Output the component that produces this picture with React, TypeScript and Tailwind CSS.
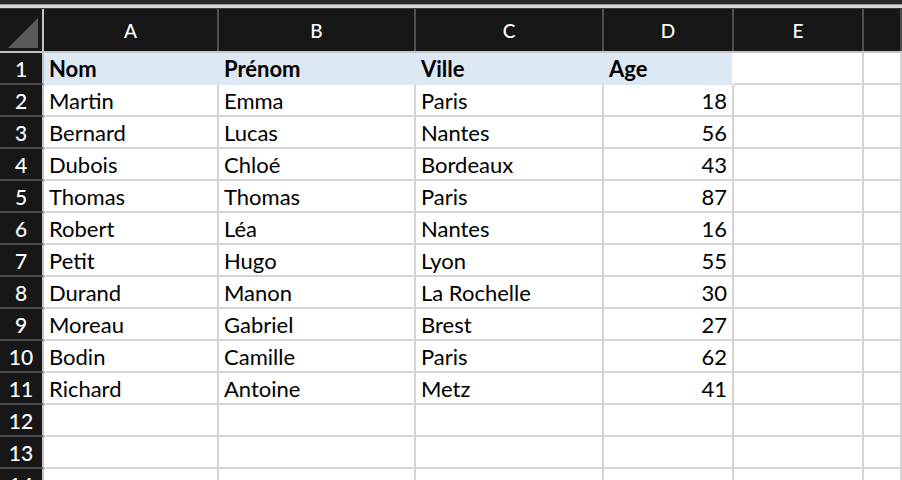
import React from "react";

const cols = [
  { key: "A", w: "w-[175px]" },
  { key: "B", w: "w-[197px]" },
  { key: "C", w: "w-[188px]" },
  { key: "D", w: "w-[130px]" },
  { key: "E", w: "w-[130px]" },
  { key: "F", w: "flex-1" },
];

const data: [string, string, string, number][] = [
  ["Martin", "Emma", "Paris", 18],
  ["Bernard", "Lucas", "Nantes", 56],
  ["Dubois", "Chloé", "Bordeaux", 43],
  ["Thomas", "Thomas", "Paris", 87],
  ["Robert", "Léa", "Nantes", 16],
  ["Petit", "Hugo", "Lyon", 55],
  ["Durand", "Manon", "La Rochelle", 30],
  ["Moreau", "Gabriel", "Brest", 27],
  ["Bodin", "Camille", "Paris", 62],
  ["Richard", "Antoine", "Metz", 41],
];

function RowHeader({ n }: { n: number }) {
  return (
    <div className="w-[44px] shrink-0 h-[32px] bg-[#171717] border-r-2 border-r-[#c4c4c4] border-b-2 border-b-[#4a4a4a] flex items-center justify-center text-white text-[21px] font-medium leading-none">
      <span className="pt-[1px]">{n}</span>
    </div>
  );
}

export default function App() {
  const rows: (string | number)[][] = [["Nom", "Prénom", "Ville", "Age", "", ""]];
  data.forEach((r) => rows.push([r[0], r[1], r[2], r[3], "", ""]));
  for (let i = 0; i < 3; i++) rows.push(["", "", "", "", "", ""]);

  return (
    <div className="w-[902px] h-[480px] overflow-hidden bg-white" style={{ fontFamily: "Lato, 'Liberation Sans', sans-serif" }}>
      <div className="h-[4px] bg-[#2c2c2c]" />
      <div className="h-[1px] bg-[#9a9a9a]" />
      <div className="h-[3px] bg-[#d8d8d8]" />
      <div className="h-[1px] bg-[#3a3a3a]" />
      {/* column headers */}
      <div className="flex h-[44px] bg-[#171717] border-b-2 border-b-[#c4c4c4]">
        <div className="w-[44px] shrink-0 border-r-2 border-r-[#c4c4c4] relative">
          <svg className="absolute left-0 top-0" width="42" height="42" viewBox="0 0 42 42">
            <polygon points="38,9 38,39 8,39" fill="#5a5a5a" />
          </svg>
        </div>
        {cols.map((c) => (
          <div
            key={c.key}
            className={`${c.w} shrink-0 border-r-2 border-r-[#4f4f4f] flex items-center justify-center text-white text-[19px] font-medium leading-none`}
          >
            {c.key === "F" ? "" : c.key}
          </div>
        ))}
      </div>
      {rows.map((r, i) => (
        <div key={i} className="flex h-[32px]">
          <RowHeader n={i + 1} />
          {cols.map((c, j) => {
            const v = r[j];
            const isHead = i === 0 && j < 4;
            const isNum = typeof v === "number";
            return (
              <div
                key={c.key}
                className={`${c.w} shrink-0 h-[32px] flex items-center px-[5px] text-[22px] leading-none text-black ${
                  isHead
                    ? j === 3
                      ? "bg-[#dde8f5] font-bold border-b-2 border-b-[#dde8f5] border-r-2 border-r-white"
                      : "bg-[#dde8f5] font-bold border-b-2 border-b-[#dde8f5] border-r-2 border-r-[#dde8f5]"
                    : "border-b-2 border-b-[#d4d4d4] border-r-2 border-r-[#d4d4d4]"
                } ${isNum ? "justify-end" : "justify-start"}`}
              >
                <span className="pt-[2px]">{v}</span>
              </div>
            );
          })}
        </div>
      ))}
    </div>
  );
}
